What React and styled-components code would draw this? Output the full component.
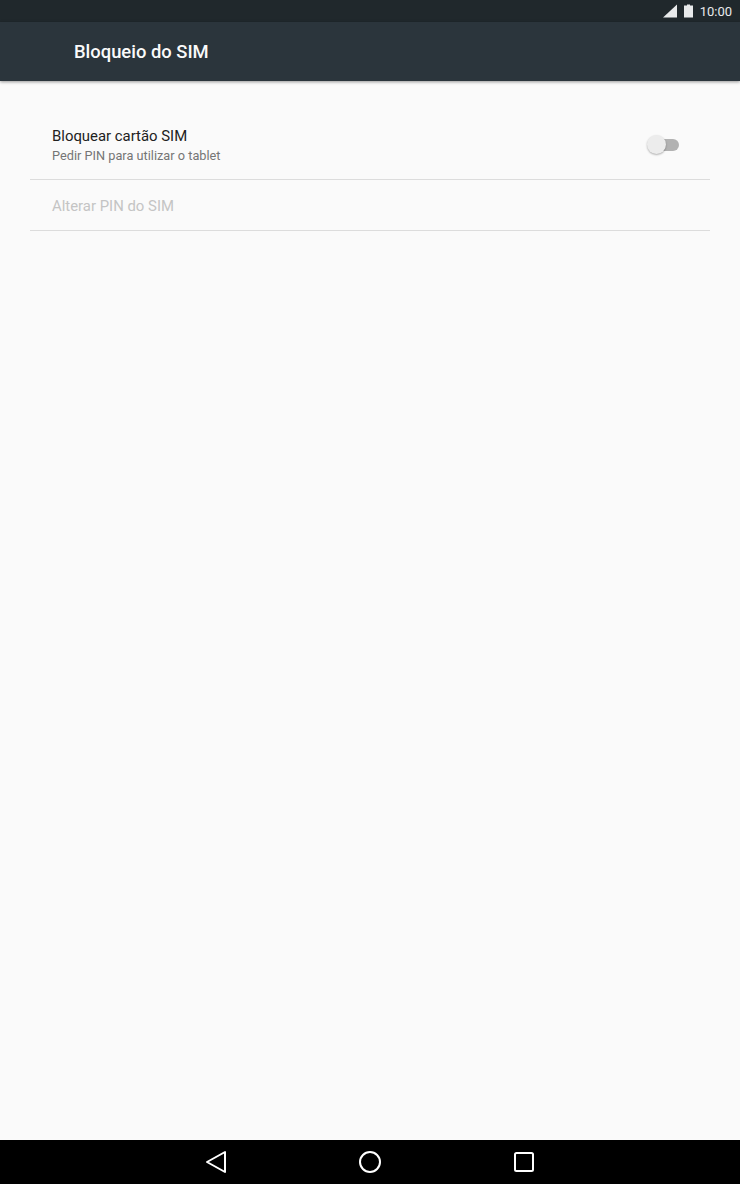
import React from 'react'
import styled, { createGlobalStyle } from 'styled-components'

const Global = createGlobalStyle`
  html, body {
    margin: 0;
    padding: 0;
    background: #fafafa;
  }
  * { box-sizing: border-box; }
`

const Screen = styled.div`
  width: 740px;
  height: 1184px;
  display: flex;
  flex-direction: column;
  background: #fafafa;
  font-family: Roboto, "Liberation Sans", sans-serif;
  overflow: hidden;
`

const StatusBar = styled.div`
  height: 22px;
  flex-shrink: 0;
  background: #20282c;
  display: flex;
  align-items: center;
  justify-content: flex-end;
  padding-right: 8px;
  color: #e8eaeb;
  font-size: 13px;
`

const SignalIcon = styled.svg`
  width: 14px;
  height: 14px;
  margin-right: 7px;
`

const BatteryIcon = styled.svg`
  width: 9px;
  height: 14px;
  margin-right: 7px;
`

const Header = styled.header`
  height: 59px;
  flex-shrink: 0;
  background: #2b353c;
  display: flex;
  align-items: center;
  padding-left: 74px;
  color: #fafafa;
  font-size: 18.4px;
  font-weight: 500;
  box-shadow: 0 1px 3px rgba(0, 0, 0, 0.4);
  position: relative;
`

const Content = styled.main`
  flex: 1;
  padding: 30px 30px 0;
`

const Row = styled.div`
  height: ${props => props.$height}px;
  padding: ${props => (props.$plain ? '2px' : '0')} 22px 0;
  display: flex;
  align-items: center;
  justify-content: space-between;
  border-bottom: 1px solid #dcdcdc;
`

const RowText = styled.div`
  display: flex;
  flex-direction: column;
`

const RowTitle = styled.div`
  font-size: 14.9px;
  line-height: 19px;
  color: ${props => (props.$disabled ? '#c4c4c4' : '#212121')};
`

const RowSummary = styled.div`
  font-size: 12.75px;
  line-height: 16px;
  margin-top: 2px;
  color: #757575;
`

const Toggle = styled.div`
  position: relative;
  width: 32px;
  height: 20px;
  margin-right: 9px;
  margin-top: -1px;
`

const ToggleTrack = styled.div`
  position: absolute;
  left: 9px;
  top: 4px;
  width: 23px;
  height: 12px;
  border-radius: 6px;
  background: #b2b2b2;
`

const ToggleThumb = styled.div`
  position: absolute;
  left: 0;
  top: 0;
  width: 19px;
  height: 19px;
  border-radius: 50%;
  background: #ececec;
  box-shadow: 0 1px 2px rgba(0, 0, 0, 0.3);
`

const NavBar = styled.nav`
  height: 44px;
  flex-shrink: 0;
  background: #000;
  display: flex;
  align-items: center;
  justify-content: center;
  gap: 130px;
`

const NavIcon = styled.svg`
  width: 24px;
  height: 24px;
  fill: none;
  stroke: #fff;
  stroke-width: 2;
  stroke-linejoin: round;
`

export default function App() {
  return (
    <Screen>
      <Global />
      <StatusBar>
        <SignalIcon viewBox="0 0 14 14">
          <path d="M0 13.5 L14 0.5 V13.5 Z" fill="#e8eaeb" />
        </SignalIcon>
        <BatteryIcon viewBox="0 0 9 14">
          <path d="M3 0.5 H6 V1.5 H9 V13.5 H0 V1.5 H3 Z" fill="#e8eaeb" />
        </BatteryIcon>
        <span>10:00</span>
      </StatusBar>
      <Header>Bloqueio do SIM</Header>
      <Content>
        <Row $height={69}>
          <RowText>
            <RowTitle>Bloquear cartão SIM</RowTitle>
            <RowSummary>Pedir PIN para utilizar o tablet</RowSummary>
          </RowText>
          <Toggle>
            <ToggleTrack />
            <ToggleThumb />
          </Toggle>
        </Row>
        <Row $height={51} $plain>
          <RowTitle $disabled>Alterar PIN do SIM</RowTitle>
        </Row>
      </Content>
      <NavBar>
        <NavIcon viewBox="0 0 24 24">
          <path d="M21 2 V22 L3 12 Z" />
        </NavIcon>
        <NavIcon viewBox="0 0 24 24">
          <circle cx="12" cy="12" r="10" />
        </NavIcon>
        <NavIcon viewBox="0 0 24 24">
          <rect x="3" y="3" width="18" height="18" rx="1.5" />
        </NavIcon>
      </NavBar>
    </Screen>
  )
}
